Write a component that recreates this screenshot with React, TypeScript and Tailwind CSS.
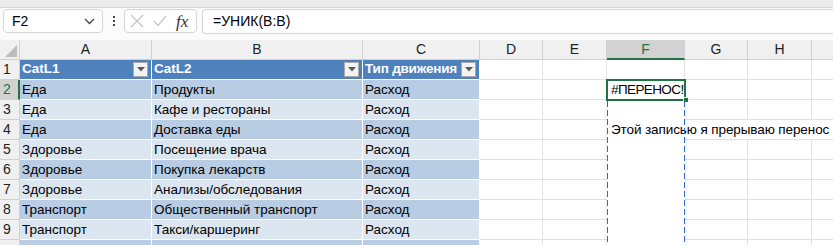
import React from 'react';

const rows: [string, string, string][] = [
  ['Еда', 'Продукты', 'Расход'],
  ['Еда', 'Кафе и рестораны', 'Расход'],
  ['Еда', 'Доставка еды', 'Расход'],
  ['Здоровье', 'Посещение врача', 'Расход'],
  ['Здоровье', 'Покупка лекарств', 'Расход'],
  ['Здоровье', 'Анализы/обследования', 'Расход'],
  ['Транспорт', 'Общественный транспорт', 'Расход'],
  ['Транспорт', 'Такси/каршеринг', 'Расход'],
  ['', '', ''],
];

function FilterButton() {
  return (
    <div className="ml-auto mr-[3px] flex h-[15px] w-[15px] shrink-0 items-center justify-center border border-[#a9a9a9] bg-[#f3f3f3]">
      <svg width="8" height="5" viewBox="0 0 8 5">
        <polygon points="0,0 8,0 4,4.5" fill="#5a5a5a" />
      </svg>
    </div>
  );
}

function ColHeader({ label, w, active }: { label: string; w: string; active?: boolean }) {
  return (
    <div
      className={`${w} flex h-[20px] shrink-0 items-center justify-center border-r border-[#d0d0d0] text-[14px] ${
        active ? 'border-b-2 border-b-[#217346] bg-[#d2d2d2] text-[#217346]' : 'border-b border-b-[#d0d0d0] text-[#222]'
      }`}
    >
      {label}
    </div>
  );
}

export default function App() {
  return (
    <div className="relative h-[245px] w-[833px] overflow-hidden bg-white font-['Liberation_Sans',Arial,sans-serif] text-black">
      {/* верхняя полоса */}
      <div className="h-[8px] border-b border-[#d6d6d6] bg-[#ececec]" />

      {/* строка формул */}
      <div className="flex h-[32px] items-start bg-[#fbfbfb] pt-[1px]">
        <div className="ml-[3px] flex h-[24px] w-[100px] items-center rounded-[4px] border border-[#d6d6d6] bg-white pl-[8px] pr-[7px] text-[14px]">
          <span>F2</span>
          <svg className="ml-auto" width="11" height="7" viewBox="0 0 11 7">
            <polyline points="1,1 5.5,5.5 10,1" fill="none" stroke="#444" strokeWidth="1.3" />
          </svg>
        </div>
        <div className="flex h-[24px] w-[21px] flex-col items-center justify-center gap-[2px]">
          <span className="h-[2px] w-[2px] bg-[#444]" />
          <span className="h-[2px] w-[2px] bg-[#444]" />
          <span className="h-[2px] w-[2px] bg-[#444]" />
        </div>
        <div className="flex h-[24px] w-[73px] items-center rounded-[4px] border border-[#d6d6d6] bg-white pl-[5px]">
          <svg width="14" height="14" viewBox="0 0 14 14">
            <path d="M1 1 L13 13 M13 1 L1 13" stroke="#c4c4c4" strokeWidth="1.2" />
          </svg>
          <svg className="ml-[9px]" width="14" height="12" viewBox="0 0 14 12">
            <polyline points="1,6 5,10.5 13,1" fill="none" stroke="#c4c4c4" strokeWidth="1.2" />
          </svg>
          <span className="ml-[9px] font-['Liberation_Serif',serif] text-[17px] italic leading-none text-[#333]">fx</span>
        </div>
        <div className="ml-[5px] flex h-[25px] flex-1 items-center rounded-l-[4px] border border-r-0 border-[#d6d6d6] bg-white pl-[10px] text-[14px]">
          =УНИК(B:B)
        </div>
      </div>

      {/* заголовки столбцов */}
      <div className="flex bg-[#f0f0f0]">
        <div className="relative h-[20px] w-[20px] shrink-0 border-r border-b border-[#d0d0d0]">
          <svg className="absolute left-[5px] top-[5px]" width="12" height="12" viewBox="0 0 12 12">
            <polygon points="12,0 12,12 0,12" fill="#bdbdbd" />
          </svg>
        </div>
        <ColHeader label="A" w="w-[132px]" />
        <ColHeader label="B" w="w-[211px]" />
        <ColHeader label="C" w="w-[117px]" />
        <ColHeader label="D" w="w-[63px]" />
        <ColHeader label="E" w="w-[64px]" />
        <ColHeader label="F" w="w-[78px]" active />
        <ColHeader label="G" w="w-[63px]" />
        <ColHeader label="H" w="w-[64px]" />
        <div className="h-[20px] flex-1 border-b border-[#d0d0d0]" />
      </div>

      {/* строка 1: заголовок таблицы */}
      <div className="flex h-[20px] text-[13.5px]">
        <div className="flex w-[20px] shrink-0 items-center border-r border-b border-[#d0d0d0] bg-[#f0f0f0] pl-[3px] text-[14px] text-[#222]">1</div>
        <div className="flex w-[132px] shrink-0 items-center border-r border-b border-white bg-[#4f81bd] pl-[2px] font-bold text-white">
          CatL1
          <FilterButton />
        </div>
        <div className="flex w-[211px] shrink-0 items-center border-r border-b border-white bg-[#4f81bd] pl-[2px] font-bold text-white">
          CatL2
          <FilterButton />
        </div>
        <div className="flex w-[117px] shrink-0 items-center border-r border-b border-white bg-[#4f81bd] pl-[2px] font-bold text-white">
          <span className="whitespace-nowrap tracking-[-0.2px]">Тип движения</span>
          <FilterButton />
        </div>
        <div className="w-[63px] shrink-0 border-r border-b border-[#e1e1e1]" />
        <div className="w-[64px] shrink-0 border-r border-b border-[#e1e1e1]" />
        <div className="w-[78px] shrink-0 border-r border-b border-[#e1e1e1]" />
        <div className="w-[63px] shrink-0 border-r border-b border-[#e1e1e1]" />
        <div className="w-[64px] shrink-0 border-r border-b border-[#e1e1e1]" />
        <div className="flex-1 border-b border-[#e1e1e1]" />
      </div>

      {/* строки данных */}
      {rows.map((r, i) => {
        const n = i + 2;
        const dark = n % 2 === 0;
        const bg = dark ? 'bg-[#b8cce4]' : 'bg-[#dce6f1]';
        const selected = n === 2;
        const spill = n >= 3;
        const overflowRow = n === 4;
        // строка 10 видна лишь краем — номер ниже края окна
        const label = n < 10 ? n : '';
        return (
          <div key={n} className="flex h-[20px] text-[13.5px]">
            <div
              className={`flex w-[20px] shrink-0 items-center border-b border-[#d0d0d0] pl-[3px] text-[14px] ${
                selected ? 'border-r-2 border-r-[#217346] bg-[#d2d2d2] text-[#217346]' : 'border-r bg-[#f0f0f0] text-[#222]'
              }`}
            >
              {label}
            </div>
            <div className={`flex w-[132px] shrink-0 items-center border-r border-b border-white pl-[2px] pt-[1px] ${bg}`}>{r[0]}</div>
            <div className={`flex w-[211px] shrink-0 items-center border-r border-b border-white pl-[2px] pt-[1px] whitespace-nowrap ${bg}`}>{r[1]}</div>
            <div className={`flex w-[117px] shrink-0 items-center border-r border-b border-white pl-[2px] pt-[1px] ${bg}`}>{r[2]}</div>
            <div className="w-[63px] shrink-0 border-r border-b border-[#e1e1e1]" />
            <div className={`w-[64px] shrink-0 border-b border-[#e1e1e1] ${spill ? '' : 'border-r'}`} />
            <div
              className={`flex w-[78px] shrink-0 items-center pl-[4px] pt-[1px] whitespace-nowrap ${
                spill ? '' : 'border-r border-b border-[#e1e1e1]'
              }`}
            >
              {selected && <span className="tracking-[-0.6px]">#ПЕРЕНОС!</span>}
              {overflowRow && <span className="tracking-[-0.1px]">Этой записью я прерываю перенос</span>}
            </div>
            <div className={`w-[63px] shrink-0 border-b border-[#e1e1e1] ${overflowRow ? '' : 'border-r'}`} />
            <div className={`w-[64px] shrink-0 border-b border-[#e1e1e1] ${overflowRow ? '' : 'border-r'}`} />
            <div className="flex-1 border-b border-[#e1e1e1]" />
          </div>
        );
      })}

      {/* выделение F2 и граница диапазона переноса */}
      <div className="pointer-events-none absolute left-[606px] top-[79px] h-[22px] w-[80px] border-2 border-[#217346]" />
      <div className="pointer-events-none absolute left-[683px] top-[97px] h-[6px] w-[6px] border border-white bg-[#217346]" />
      <div className="pointer-events-none absolute left-[607px] top-[101px] h-[150px] w-[78px] shadow-[0_0_4px_rgba(0,0,0,0.10)]" />
      <div className="pointer-events-none absolute left-[607px] top-[101px] h-[150px] w-[1px] bg-[repeating-linear-gradient(to_bottom,#3567cc_0_6px,transparent_6px_9px)]" />
      <div className="pointer-events-none absolute left-[684px] top-[101px] h-[150px] w-[1px] bg-[repeating-linear-gradient(to_bottom,#3567cc_0_6px,transparent_6px_9px)]" />
    </div>
  );
}
